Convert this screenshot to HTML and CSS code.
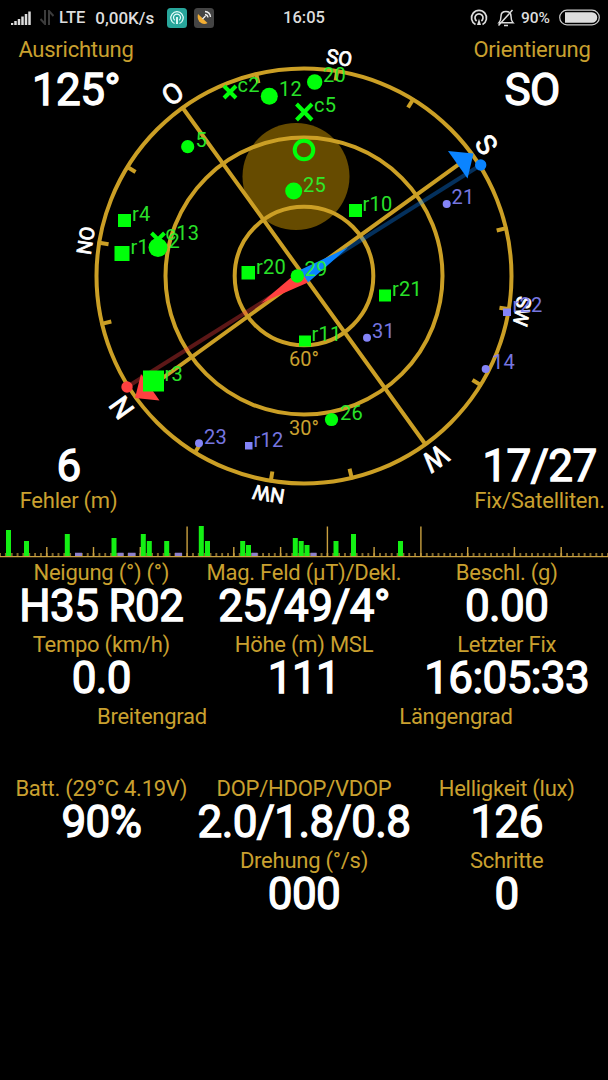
FILE: index.html
```html
<!DOCTYPE html>
<html lang="de">
<head>
<meta charset="utf-8">
<title>GPS Status</title>
<link rel="stylesheet" href="styles.css">
</head>
<body>
<header class="status">
  <div class="status-left">
    <svg class="signal" width="20" height="14" viewBox="0 0 20 14"><path d="M1 14v-2M4.500 14v-4M8 14V8M11.500 14V5.500M15 14V3M18.500 14V0.500" stroke="#ddd" stroke-width="2.500"/></svg>
    <svg class="updown" width="14" height="15" viewBox="0 0 14 15"><path d="M5 0v14L0.500 9M9 15V1l4.500 5" fill="none" stroke="#3c3c3c" stroke-width="2"/></svg>
    <span class="lte">LTE</span>
    <span class="rate">0,00K/s</span>
    <svg class="app" width="20" height="20" viewBox="0 0 20 20"><rect width="20" height="20" rx="3.500" fill="#28a69b"/><g fill="none" stroke="#e9fffc" stroke-width="1.200"><path d="M7.500 15.500a6.200 6.200 0 1 1 5 0M7.800 12.300a3.500 3.500 0 1 1 4.400 0"/><path d="M10 9v7" stroke-width="1.800"/></g></svg>
    <svg class="app2" width="20" height="20" viewBox="0 0 20 20"><rect width="20" height="20" rx="3.500" fill="#444"/><path d="M4 6l9.500 9C9 18 2 13.500 4 6z" fill="#f3ae32"/><path d="M8.500 11l3-3M11 6.500a3.500 3.500 0 0 1 3 3M11 3.500a6 6 0 0 1 5.500 5.500" fill="none" stroke="#eee" stroke-width="1.300"/></svg>
  </div>
  <span class="clock">16:05</span>
  <div class="status-right">
    <svg width="18" height="18" viewBox="0 0 18 18" fill="none" stroke="#ddd" stroke-width="1.700"><path d="M5.500 15.500a7.500 7.500 0 1 1 7 0M6.600 12a4 4 0 1 1 4.800 0"/><path d="M9 9.500l2 6.500H7z" fill="#ddd" stroke="none"/></svg>
    <svg class="bell" width="18" height="18" viewBox="0 0 18 18" fill="none" stroke="#ddd" stroke-width="1.500"><path d="M2 13.700h14c-2-2-2-3.500-2-6.500C14 4 12 2.500 9 2.500S4 4 4 7.200c0 3-0.200 4.500-2 6.500zM7 16.500h4M1.500 16.500L15.500 1"/></svg>
    <span class="battery-text">90%</span>
    <svg width="41" height="17" viewBox="0 0 41 17"><rect x="0.700" y="1.200" width="39.600" height="14.600" rx="7.300" fill="none" stroke="#ccc" stroke-width="1.200"/><path d="M6 3.200h27a5.200 5.200 0 0 1 0 10.500H6z" fill="#ddd"/></svg>
  </div>
</header>

<main>
<section class="compass">
  <svg class="dial" width="608" height="487" viewBox="0 35 608 487">
    <circle cx="296" cy="176.500" r="53.500" fill="#664b00"/>
    <g class="gold">
      <circle cx="304" cy="276" r="207.500"/>
      <circle cx="304" cy="276" r="138.500"/>
      <circle cx="304" cy="276" r="69.300"/>
      <g transform="translate(304 276) rotate(-35.800)">
        <path d="M0-209V209M-209 0H209"/>
        <path id="tick" d="M0-209v11" transform="rotate(22.500)"/>
        <use href="#tick" transform="rotate(22.500)"/>
        <use href="#tick" transform="rotate(45)"/>
        <use href="#tick" transform="rotate(90)"/>
        <use href="#tick" transform="rotate(112.500)"/>
        <use href="#tick" transform="rotate(135)"/>
        <use href="#tick" transform="rotate(180)"/>
        <use href="#tick" transform="rotate(202.500)"/>
        <use href="#tick" transform="rotate(225)"/>
        <use href="#tick" transform="rotate(270)"/>
        <use href="#tick" transform="rotate(292.500)"/>
        <use href="#tick" transform="rotate(315)"/>
      </g>
    </g>
    <path d="M304 276L480.700 165" stroke="#0a84ff" stroke-opacity=".36" stroke-width="4"/>
    <path d="M304 276L127 387" stroke="#ff4040" stroke-opacity=".36" stroke-width="4"/>
    <path d="M300 270L348 247.500L308 282.500z" fill="#0a84ff"/>
    <path d="M300 270L261 303L308 282.500z" fill="#ff4040"/>
    <path d="M448 151L473.500 153.500L467.500 178.500z" fill="#0a84ff"/>
    <path d="M141 374L135 398L159.500 400.500z" fill="#ff4040"/>
    <circle cx="480.700" cy="165" r="5.700" fill="#0a84ff"/>
    <circle cx="127" cy="387" r="5.700" fill="#ff4040"/>

    <g class="cardinal" transform="translate(304 276) rotate(-35.800)">
      <text class="major" y="-215">O</text>
      <text class="minor" y="-214" transform="rotate(45)">SO</text>
      <text class="major" y="-215" transform="rotate(90)">S</text>
      <text class="minor" y="-214" transform="rotate(135)">SW</text>
      <text class="major" y="-215" transform="rotate(180)">W</text>
      <text class="minor" y="-214" transform="rotate(225)">NW</text>
      <text class="major" y="-215" transform="rotate(270)">N</text>
      <text class="minor" y="-214" transform="rotate(315)">NO</text>
    </g>

    <g class="elevation"><text x="304" y="365.500">60°</text><text x="304" y="434.500">30°</text></g>

    <g class="fix-mark">
      <path class="cross" d="M224 86l12 12M236 86l-12 12M296.500 104l15.500 16M312 104l-15.500 16M151.500 233l13 13M164.500 233l-13 13"/>
      <circle class="cross" cx="304" cy="150" r="9.300"/>
      <circle cx="269.300" cy="96.300" r="8.500"/>
      <circle cx="314.700" cy="82" r="7.700"/>
      <circle cx="187.700" cy="146.700" r="6.600"/>
      <circle cx="293.700" cy="191" r="8.500"/>
      <circle cx="297.300" cy="276" r="6.700"/>
      <circle cx="331.500" cy="419.500" r="6.600"/>
      <rect x="349" y="204" width="13" height="13"/>
      <rect x="118" y="214" width="13" height="13"/>
      <rect x="114.500" y="246" width="15" height="15"/>
      <rect x="241.500" y="266" width="13.500" height="13.500"/>
      <rect x="379" y="289.500" width="12" height="12"/>
      <rect x="299" y="335.500" width="12" height="11"/>
      <rect x="143" y="370.500" width="21" height="21"/>
    </g>
    <g class="fix-label">
      <text x="237.500" y="92">c2</text><text x="279" y="95.700">12</text>
      <text x="323" y="82">20</text><text x="314" y="112">c5</text>
      <text x="195.500" y="147">5</text><text x="303" y="191.500">25</text>
      <text x="362.500" y="210.500">r10</text><text x="132" y="221">r4</text>
      <text x="130.500" y="253.500">r1</text><text x="165.500" y="240">c13</text>
      <text x="168.500" y="248">2</text><text x="256" y="273.500">r20</text>
      <text x="304.500" y="276">29</text><text x="392" y="295.700">r21</text>
      <text x="311.500" y="341">r11</text><text x="340" y="419.500">26</text>
      <text x="164.500" y="381.300">r3</text>
    </g>
    <circle cx="158" cy="247.500" r="9.500" fill="#00ff0a"/>
    <g class="view-mark">
      <circle cx="446.700" cy="204" r="4"/><circle cx="367" cy="337.700" r="4"/>
      <circle cx="485.700" cy="369" r="4"/><circle cx="199" cy="443.300" r="4"/>
      <rect x="503" y="308.500" width="8" height="7.500"/><rect x="245" y="442" width="7.500" height="7.500"/>
    </g>
    <g class="view-label">
      <text x="451.500" y="203.500">21</text><text x="372" y="338">31</text>
      <text x="512.500" y="312">r22</text><text x="492" y="369">14</text>
      <text x="204" y="443.500">23</text><text x="253.500" y="446.500">r12</text>
    </g>
  </svg>
  <div class="corners">
    <div class="corner-row top">
      <div class="corner"><div class="label">Ausrichtung</div><div class="value">125°</div></div>
      <div class="corner"><div class="label">Orientierung</div><div class="value">SO</div></div>
    </div>
    <div class="corner-row bottom">
      <div class="corner"><div class="value">6</div><div class="label">Fehler (m)</div></div>
      <div class="corner"><div class="value">17/27</div><div class="label">Fix/Satelliten.</div></div>
    </div>
  </div>
</section>

<svg class="spectrum" width="608" height="36" viewBox="0 522 608 36">
  <defs><pattern id="scale" x="-2.923" y="553" width="5.846" height="4" patternUnits="userSpaceOnUse"><rect x="2.300" width="1.300" height="4" fill="#c9a040"/></pattern></defs>
  <rect y="553" width="608" height="4" fill="url(#scale)"/>
  <path d="M46.800 547v9M93.500 547v9M140.300 547v9M233.800 547v9M280.600 547v9M374.100 547v9M467.700 547v9M514.400 547v9M561.200 547v9M187.100 526.500v30M327.400 526.500v30M420.900 526.500v30" stroke="#c9a040" stroke-width="1.400"/>
  <path d="M75 554.500h7M117.500 554.500h6M128 554.500h7.500M175 554.500h7M251.500 554.500h6M310.500 554.500h6" stroke="#8c80cc" stroke-width="3.500"/>
  <path d="M8.500 530v26M26.500 541v15M67.300 534v22M114 538v18M143.300 534v22M149.300 541v15M166.700 541v15M201.300 526v30M207.500 541v15M242.700 541v15M248.500 545v11M295.300 538v18M301.200 541v15M307 545v11M336 541v15M353.500 534v22M400.500 541v15" stroke="#14f014" stroke-width="5"/>
  <path d="M0 556.700h608" stroke="#c9a040" stroke-width="1.300"/>
</svg>

<section class="readouts">
  <div class="row three">
    <div><div class="label">Neigung (°) (°)</div><div class="value">H35 R02</div></div>
    <div><div class="label">Mag. Feld (µT)/Dekl.</div><div class="value">25/49/4°</div></div>
    <div><div class="label">Beschl. (g)</div><div class="value">0.00</div></div>
  </div>
  <div class="row three">
    <div><div class="label">Tempo (km/h)</div><div class="value">0.0</div></div>
    <div><div class="label">Höhe (m) MSL</div><div class="value">111</div></div>
    <div><div class="label">Letzter Fix</div><div class="value">16:05:33</div></div>
  </div>
  <div class="row two">
    <div><div class="label">Breitengrad</div></div>
    <div><div class="label">Längengrad</div></div>
  </div>
  <div class="row three">
    <div><div class="label">Batt. (29°C 4.19V)</div><div class="value">90%</div></div>
    <div class="wide"><div class="label">DOP/HDOP/VDOP</div><div class="value">2.0/1.8/0.8</div></div>
    <div><div class="label">Helligkeit (lux)</div><div class="value">126</div></div>
  </div>
  <div class="row three">
    <div></div>
    <div><div class="label">Drehung (°/s)</div><div class="value">000</div></div>
    <div><div class="label">Schritte</div><div class="value">0</div></div>
  </div>
</section>
</main>
</body>
</html>
```

FILE: styles.css
```css
* { box-sizing: border-box; }
body {
  margin: 0;
  height: 1080px;
  overflow: hidden;
  background: #000;
  color: #fff;
  font-family: Roboto, "Liberation Sans", sans-serif;
}
svg { display: block; flex: none; }

.status {
  display: grid;
  grid-template-columns: 1fr auto 1fr;
  align-items: center;
  height: 35px;
  padding: 0 8px 0 11px;
  color: #ddd;
  font-size: 16.5px;
  font-weight: 500;
  line-height: 34px;
}
.status-left, .status-right { display: flex; align-items: center; }
.status-right { justify-content: flex-end; }
.clock { margin-right: 3px; }
.updown { margin-left: 9px; }
.lte { margin-left: 5px; }
.rate { margin-left: 10px; font-size: 17px; }
.app { margin-left: 13px; }
.app2 { margin-left: 7px; }
.bell { margin-left: 9px; }
.battery-text { margin: 0 9px 0 6px; font-size: 15.5px; }

.compass { display: grid; height: 487px; }
.dial, .corners { grid-area: 1 / 1; }
.corners { display: flex; flex-direction: column; justify-content: space-between; padding-top: 1px; }
.corner-row { display: flex; justify-content: space-between; text-align: center; }
.top .corner { width: 152px; }
.top .value { margin-top: 7px; }
.bottom { padding-bottom: 7px; }
.bottom .corner { width: 137px; }
.bottom .value { margin-bottom: 2px; }

.label {
  height: 28px;
  color: #c9a02f;
  font-size: 22px;
  letter-spacing: -0.25px;
  line-height: 28px;
  white-space: nowrap;
}
.value {
  height: 38px;
  font-size: 44px;
  letter-spacing: -0.6px;
  line-height: 38px;
  white-space: nowrap;
  -webkit-text-stroke: 1.3px #fff;
}

.gold { fill: none; stroke: #cb9f25; stroke-width: 4; }
.cardinal { fill: #fff; stroke: #fff; stroke-width: 0.8; text-anchor: middle; }
.major { font-size: 28px; }
.minor { font-size: 20px; }
.elevation { fill: #c9a02f; font-size: 20px; text-anchor: middle; }
.fix-mark { fill: #00ff0a; }
.cross { fill: none; stroke: #00ff0a; stroke-width: 4; }
.fix-label { fill: #2df52d; font-size: 20px; letter-spacing: 0.3px; opacity: 0.92; }
.view-mark { fill: #8484f8; }
.view-label { fill: #8080f4; font-size: 20px; letter-spacing: 0.3px; opacity: 0.92; }

.readouts { padding-top: 1px; }
.row { display: grid; height: 72px; text-align: center; }
.three { grid-template-columns: repeat(3, minmax(0, 1fr)); }
.two { grid-template-columns: repeat(2, 1fr); }
.wide { justify-self: center; }
```
